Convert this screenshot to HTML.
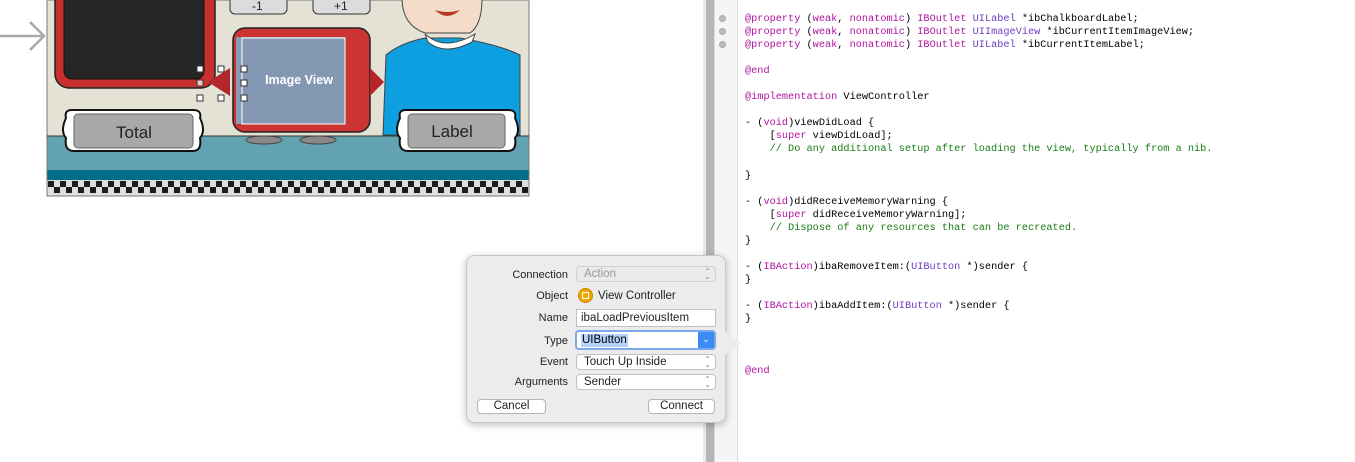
<!DOCTYPE html>
<html><head><meta charset="utf-8"><style>
*{margin:0;padding:0;box-sizing:border-box}
body{width:1355px;height:462px;background:#fff;position:relative;overflow:hidden;font-family:"Liberation Sans",sans-serif}
.abs{position:absolute}
#code{position:absolute;left:745px;top:13px;font-family:"Liberation Mono",monospace;font-size:10.25px;line-height:13.05px;white-space:pre;color:#000}
.k{color:#b0139e}.c{color:#1a7c14}.t{color:#6d3ec0}
.lbl{position:absolute;right:787px;font-size:11px;color:#222;text-align:right}
.fld{position:absolute;left:576px;width:140px;height:16px;border:1px solid #c2c2c2;border-radius:4px;background:#fff;font-size:11.5px;padding-left:7px;line-height:14px;color:#222}
.arr{position:absolute;right:4px;top:2px;font-size:8px;color:#888;line-height:5px}
.btn{position:absolute;height:15px;border:1px solid #b5b5b5;border-radius:4px;background:#fff;font-size:11.5px;text-align:center;line-height:13px;color:#222}
</style></head><body>
<svg class="abs" style="left:0;top:0" width="704" height="462">
<path d="M0 36 H44 M30 22 L44 36 L30 50" stroke="#a9a9a9" stroke-width="2.5" fill="none"/>
<rect x="47" y="0" width="482" height="196" fill="#e4e1d5" stroke="#777" stroke-width="1"/>
<rect x="47.5" y="136" width="481" height="34" fill="#63a2b1"/>
<line x1="47" y1="136" x2="529" y2="136" stroke="#333" stroke-width="1"/>
<rect x="47.5" y="170" width="481" height="10" fill="#006e8a"/>
<rect x="47.5" y="180" width="481" height="15" fill="#ddd"/>
<g id="chk"></g>
<rect x="55" y="-12" width="160" height="100" rx="14" fill="#c8302f" stroke="#222" stroke-width="1.5"/>
<rect x="64" y="-10" width="140" height="89" rx="8" fill="#262626" stroke="#111"/>
<rect x="230" y="-6" width="57" height="20" rx="5" fill="#dcdcdc" stroke="#333"/>
<rect x="313" y="-6" width="57" height="20" rx="5" fill="#dcdcdc" stroke="#333"/>
<text x="252" y="10" font-size="12" fill="#222">-1</text><text x="334" y="10" font-size="12" fill="#222">+1</text>
<ellipse cx="264" cy="140" rx="18" ry="4" fill="#888" stroke="#444"/>
<ellipse cx="318" cy="140" rx="18" ry="4" fill="#888" stroke="#444"/>
<rect x="233" y="28" width="137" height="104" rx="12" fill="#cc3433" stroke="#222" stroke-width="1.5"/>
<rect x="236" y="37" width="109" height="87" fill="#8a9bb5"/>
<rect x="242" y="38" width="103" height="86" fill="#8598b3" stroke="#fff" stroke-width="1"/>
<text x="299" y="84" font-size="12.5" font-weight="bold" fill="#fff" text-anchor="middle">Image View</text>
<path d="M208 82 L230 68 V96 Z" fill="#b3272a"/>
<path d="M370 68 L384 82 L370 96 Z" fill="#b3272a"/>
<g fill="#fff" stroke="#333" stroke-width="1"><rect x="197" y="66" width="6" height="6"/><rect x="197" y="80" width="6" height="6" fill="#f0c8c8"/><rect x="197" y="95" width="6" height="6"/><rect x="218" y="66" width="6" height="6"/><rect x="218" y="95" width="6" height="6"/><rect x="241" y="66" width="6" height="6"/><rect x="241" y="80" width="6" height="6"/><rect x="241" y="95" width="6" height="6"/></g>
<path d="M383 135 L386 55 Q400 43 425 38 L460 38 Q500 45 520 55 L520 135 Z" fill="#0d9fdf" stroke="#444"/>
<path d="M425 34 Q445 52 475 34 L472 42 Q445 56 428 42Z" fill="#fff" stroke="#444"/>
<path d="M402 -2 Q402 25 425 33 L470 33 Q482 25 482 -2Z" fill="#f4dcc9" stroke="#444"/>
<path d="M435 10 Q447 22 460 10 Q447 14 435 10Z" fill="#b33b25"/>
<path d="M72 110 Q64 110 66 118 Q60 131 66 138 Q64 151 74 151 L193 151 Q202 151 200 138 Q206 131 200 118 Q202 110 193 110Z" fill="#fff" stroke="#111" stroke-width="2"/>
<rect x="74" y="114" width="119" height="34" rx="4" fill="#a8a8a8" stroke="#666"/>
<text x="134" y="138" font-size="17" fill="#222" text-anchor="middle">Total</text>
<path d="M406 110 Q398 110 400 118 Q394 131 400 138 Q398 151 408 151 L508 151 Q517 151 515 138 Q521 131 515 118 Q517 110 508 110Z" fill="#fff" stroke="#111" stroke-width="2"/>
<rect x="408" y="114" width="97" height="34" rx="4" fill="#a8a8a8" stroke="#666"/>
<text x="452" y="137" font-size="17" fill="#222" text-anchor="middle">Label</text>
</svg>
<script>
(function(){var g=document.getElementById('chk'),s='';for(var r=0;r<2;r++)for(var i=0;i<81;i++){var x=48+i*6;if(x>523)break;if((i+r)%2==0)s+='<rect x="'+x+'" y="'+(181+r*6)+'" width="6" height="6" fill="#1c1c1c"/>';}g.innerHTML=s;})();
</script>
<div class="abs" style="left:703px;top:0;width:3px;height:462px;background:#e9e9e9"></div>
<div class="abs" style="left:706px;top:0;width:8px;height:462px;background:#b5b5b5"></div>
<div class="abs" style="left:714px;top:0;width:24px;height:462px;background:#f5f5f5;border-left:1px solid #ddd;border-right:1px solid #e0e0e0"></div>
<div class="abs" style="left:719px;top:15px;width:7px;height:7px;border-radius:50%;background:#bbb;border:1px solid #aaa"></div>
<div class="abs" style="left:719px;top:28px;width:7px;height:7px;border-radius:50%;background:#bbb;border:1px solid #aaa"></div>
<div class="abs" style="left:719px;top:41px;width:7px;height:7px;border-radius:50%;background:#bbb;border:1px solid #aaa"></div>
<div id="code"><span class="k">@property</span> (<span class="k">weak</span>, <span class="k">nonatomic</span>) <span class="k">IBOutlet</span> <span class="t">UILabel</span> *ibChalkboardLabel;
<span class="k">@property</span> (<span class="k">weak</span>, <span class="k">nonatomic</span>) <span class="k">IBOutlet</span> <span class="t">UIImageView</span> *ibCurrentItemImageView;
<span class="k">@property</span> (<span class="k">weak</span>, <span class="k">nonatomic</span>) <span class="k">IBOutlet</span> <span class="t">UILabel</span> *ibCurrentItemLabel;

<span class="k">@end</span>

<span class="k">@implementation</span> ViewController

- (<span class="k">void</span>)viewDidLoad {
    [<span class="k">super</span> viewDidLoad];
    <span class="c">// Do any additional setup after loading the view, typically from a nib.</span>

}

- (<span class="k">void</span>)didReceiveMemoryWarning {
    [<span class="k">super</span> didReceiveMemoryWarning];
    <span class="c">// Dispose of any resources that can be recreated.</span>
}

- (<span class="k">IBAction</span>)ibaRemoveItem:(<span class="t">UIButton</span> *)sender {
}

- (<span class="k">IBAction</span>)ibaAddItem:(<span class="t">UIButton</span> *)sender {
}



<span class="k">@end</span></div>
<div>
<div class="abs" style="left:466px;top:255px;width:260px;height:168px;background:#ececec;border:1px solid #c8c8c8;border-radius:8px;box-shadow:0 2px 8px rgba(0,0,0,.25)"></div>
<div class="abs" style="left:725px;top:331px;width:0;height:0;border-top:12px solid transparent;border-bottom:12px solid transparent;border-left:16px solid #ececec"></div>
<div class="lbl" style="top:269px">Connection</div>
<div class="lbl" style="top:290px">Object</div>
<div class="lbl" style="top:312px">Name</div>
<div class="lbl" style="top:335px">Type</div>
<div class="lbl" style="top:356px">Event</div>
<div class="lbl" style="top:376px">Arguments</div>
<div class="fld" style="top:266px;background:#eaeaea;color:#999;border-color:#d0d0d0">Action<span class="arr">⌃<br>⌄</span></div>
<div class="abs" style="left:578px;top:288px;width:15px;height:15px;border-radius:50%;background:#f0a800;border:1px solid #c88400"><div style="margin:3px;width:7px;height:7px;border:1.5px solid #fff"></div></div>
<div class="abs" style="left:598px;top:290px;font-size:11.5px;color:#222">View Controller</div>
<div class="fld" style="top:309px;height:18px;border-radius:0;padding-left:4px;line-height:17px">ibaLoadPreviousItem</div>
<div class="abs" style="left:575px;top:330px;width:141px;height:20px;border:2px solid #7aa8e8;border-radius:4px;background:#fff"><span style="position:absolute;left:4px;top:2px;background:#b4d3fb;font-size:11.5px;line-height:13px;padding:0 1px">UIButton</span><div style="position:absolute;right:0;top:0;width:16px;height:16px;background:#3a8bf3;color:#fff;font-size:9px;text-align:center;line-height:15px">⌄</div></div>
<div class="fld" style="top:354px">Touch Up Inside<span class="arr">⌃<br>⌄</span></div>
<div class="fld" style="top:374px">Sender<span class="arr">⌃<br>⌄</span></div>
<div class="btn" style="left:477px;top:399px;width:69px">Cancel</div>
<div class="btn" style="left:648px;top:399px;width:67px">Connect</div>
</div>
</body></html>
